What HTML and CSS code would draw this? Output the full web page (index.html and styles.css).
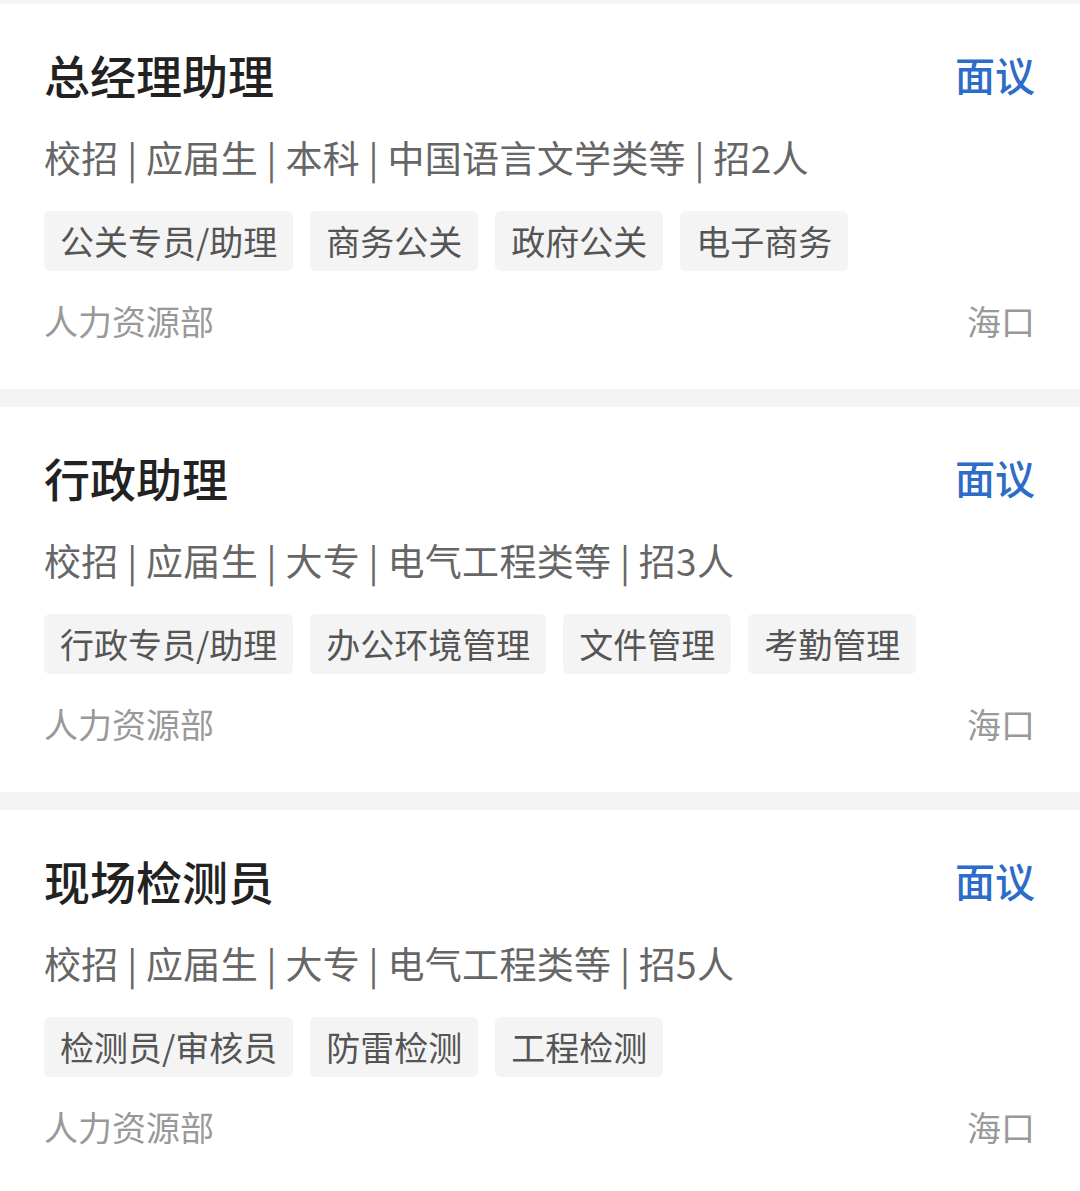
FILE: index.html
```html
<!DOCTYPE html>
<html lang="zh-CN">
	<head>
		<meta charset="UTF-8">
		<meta name="viewport" content="width=device-width, initial-scale=1.0">
		<title>职位列表</title>
		<link rel="stylesheet" href="styles.css">
	</head>
	<body>
		<div class="list">
			<div class="job">
				<div class="job-head">
					<div class="job-title">总经理助理</div>
					<div class="job-salary">面议</div>
				</div>
				<div class="job-info">校招 | 应届生 | 本科 | 中国语言文学类等 | 招2人</div>
				<div class="job-tags">
					<span class="tag">公关专员/助理</span>
					<span class="tag">商务公关</span>
					<span class="tag">政府公关</span>
					<span class="tag">电子商务</span>
				</div>
				<div class="job-foot">
					<span>人力资源部</span>
					<span>海口</span>
				</div>
			</div>

			<div class="job">
				<div class="job-head">
					<div class="job-title">行政助理</div>
					<div class="job-salary">面议</div>
				</div>
				<div class="job-info">校招 | 应届生 | 大专 | 电气工程类等 | 招3人</div>
				<div class="job-tags">
					<span class="tag">行政专员/助理</span>
					<span class="tag">办公环境管理</span>
					<span class="tag">文件管理</span>
					<span class="tag">考勤管理</span>
				</div>
				<div class="job-foot">
					<span>人力资源部</span>
					<span>海口</span>
				</div>
			</div>

			<div class="job">
				<div class="job-head">
					<div class="job-title">现场检测员</div>
					<div class="job-salary">面议</div>
				</div>
				<div class="job-info">校招 | 应届生 | 大专 | 电气工程类等 | 招5人</div>
				<div class="job-tags">
					<span class="tag">检测员/审核员</span>
					<span class="tag">防雷检测</span>
					<span class="tag">工程检测</span>
				</div>
				<div class="job-foot">
					<span>人力资源部</span>
					<span>海口</span>
				</div>
			</div>
		</div>
	</body>
</html>
```

FILE: styles.css
```css
body {
	font-family: "Noto Sans CJK SC", "Noto Sans", sans-serif;
	margin: 0;
	padding: 0;
	background-color: #f4f4f6;
}

.list {
	display: flex;
	flex-direction: column;
	gap: 18px;
	padding-top: 4px;
}

.job {
	background-color: #ffffff;
	padding: 40px 45px 43px 44px;
}

.job-head {
	display: flex;
	justify-content: space-between;
	align-items: center;
	height: 60px;
}

.job-title {
	font-size: 46px;
	font-weight: 500;
	color: #222222;
	line-height: 60px;
}

.job-salary {
	font-size: 40px;
	font-weight: 500;
	color: #2d6cc8;
	line-height: 60px;
}

.job-info {
	margin-top: 28px;
	font-size: 37px;
	letter-spacing: 0.3px;
	line-height: 50px;
	color: #666666;
}

.job-tags {
	display: flex;
	gap: 17px;
	margin-top: 29px;
}

.tag {
	height: 60px;
	line-height: 60px;
	padding: 0 16px;
	font-size: 34px;
	color: #555555;
	background-color: #f4f4f4;
	border-radius: 6px;
}

.job-foot {
	display: flex;
	justify-content: space-between;
	margin-top: 25px;
	font-size: 34px;
	line-height: 50px;
	color: #999999;
}
```
